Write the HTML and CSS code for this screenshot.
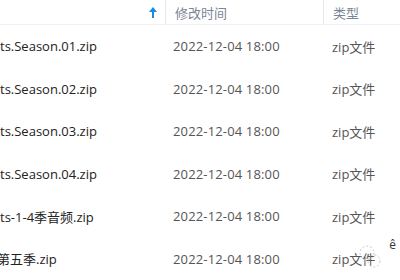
FILE: index.html
```html
<!DOCTYPE html>
<html>
<head>
    <title>文件列表</title>
    <link rel="stylesheet" href="styles.css">
</head>
<body>
    <div class="list">
        <div class="head">
            <div class="col name">
                <svg class="sort" width="8" height="11" viewBox="0 0 8 11">
                    <path d="M4 0 L8 5 L5 5 L5 11 L3 11 L3 5 L0 5 Z" fill="#1a8be0"/>
                </svg>
            </div>
            <div class="col date">修改时间</div>
            <div class="col type">类型</div>
        </div>

        <div class="row">
            <div class="col name">ts.Season.01.zip</div>
            <div class="col date">2022-12-04 18:00</div>
            <div class="col type">zip文件</div>
        </div>
        <div class="row">
            <div class="col name">ts.Season.02.zip</div>
            <div class="col date">2022-12-04 18:00</div>
            <div class="col type">zip文件</div>
        </div>
        <div class="row">
            <div class="col name">ts.Season.03.zip</div>
            <div class="col date">2022-12-04 18:00</div>
            <div class="col type">zip文件</div>
        </div>
        <div class="row">
            <div class="col name">ts.Season.04.zip</div>
            <div class="col date">2022-12-04 18:00</div>
            <div class="col type">zip文件</div>
        </div>
        <div class="row">
            <div class="col name">ts-1-4季音频.zip</div>
            <div class="col date">2022-12-04 18:00</div>
            <div class="col type">zip文件</div>
        </div>
        <div class="row">
            <div class="col name cut">第五季.zip</div>
            <div class="col date">2022-12-04 18:00</div>
            <div class="col type">zip文件</div>
        </div>
    </div>

    <!-- faint watermark in the corner -->
    <div class="mark">
        <svg width="26" height="26" viewBox="0 0 26 26">
            <circle cx="10" cy="9" r="7" fill="none" stroke="#c8c8c8" stroke-width="1" stroke-dasharray="2 2"/>
            <circle cx="17" cy="17" r="6" fill="none" stroke="#c8c8c8" stroke-width="1" stroke-dasharray="2 2"/>
        </svg>
        <span class="mark-text">ê</span>
    </div>
</body>
</html>
```
FILE: styles.css
```css
body {
    margin: 0;
    background: #ffffff;
    font-family: "Segoe UI", "Open Sans", "Noto Sans CJK SC", sans-serif;
    font-size: 13px;
    overflow: hidden;
    position: relative;
    width: 400px;
    height: 280px;
}

.list {
    display: flex;
    flex-direction: column;
}

.head {
    display: grid;
    grid-template-columns: 165px 158px 77px;
    height: 24px;
    border-bottom: 1px solid #f2f2f2;
    color: #7a8594;
}

.head .col {
    display: flex;
    align-items: center;
    padding-left: 9px;
}

.head .date,
.head .type {
    border-left: 1px solid #e6e6e6;
}

.head .name {
    justify-content: flex-end;
    padding-right: 8px;
}

.row {
    display: grid;
    grid-template-columns: 165px 158px 77px;
    height: 42.5px;
    align-items: center;
}

.row:first-of-type {
    margin-top: 0;
}

.row .name {
    color: #222222;
    white-space: nowrap;
}

.row .date {
    color: #555555;
    padding-left: 8px;
    letter-spacing: 0.15px;
}

.row .type {
    color: #555555;
    padding-left: 9px;
}

.cut {
    margin-left: -3px;
}

.mark {
    position: absolute;
    right: 4px;
    bottom: 10px;
    display: flex;
    align-items: flex-start;
    gap: 6px;
}

.mark-text {
    color: #333333;
    font-size: 12px;
    margin-top: -8px;
}
```
